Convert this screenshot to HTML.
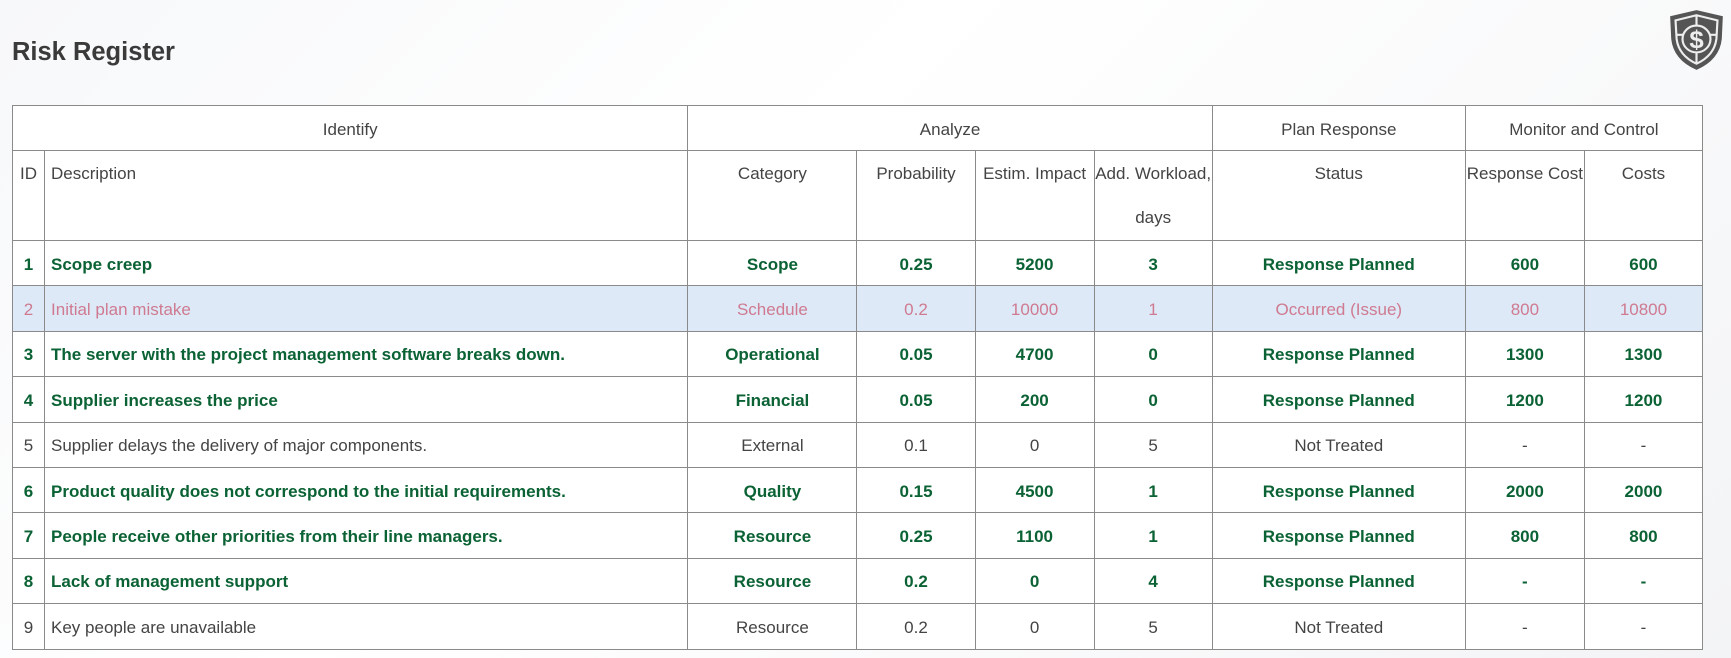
<!DOCTYPE html>
<html><head><meta charset="utf-8"><style>
html,body{margin:0;padding:0;width:1731px;height:658px;overflow:hidden;background:linear-gradient(135deg,#f7f8fa,#ffffff 40%,#f3f4f6);font-family:"Liberation Sans",sans-serif;}
h1{position:absolute;left:12px;top:38px;margin:0;font-size:25.5px;font-weight:bold;color:#3a3a3a;}
table{position:absolute;left:12px;top:105px;border-collapse:collapse;table-layout:fixed;width:1691px;font-size:17px;color:#444;background:#fff;}
td{border:1px solid #8a8a8a;text-align:center;padding:3px 0 0 0;height:41.4px;line-height:20px;white-space:nowrap;overflow:hidden;}
tr.sub td{vertical-align:top;line-height:44px;height:88px;padding-top:1px;}
tr.top td{height:41px;}
td.l{text-align:left;padding-left:6px;}
tr.g td{color:#0b6234;font-weight:bold;}
tr.p td{color:#cf7a90;background:#dde9f7;}
</style></head><body>
<h1>Risk Register</h1>
<svg style="position:absolute;left:1668px;top:8px" width="57" height="64" viewBox="0 0 53 62" preserveAspectRatio="none">
<path d="M26.5 2 L51 8 L50 30 Q48 50 26.5 60 Q5 50 3 30 L2 8 Z" fill="#555"/>
<path d="M26.5 7 L46 12 L45 30 Q43 46 26.5 54 Q10 46 8 30 L7 12 Z" fill="none" stroke="#eee" stroke-width="2"/>
<path d="M8 26 H45 M26.5 7 V54" stroke="#eee" stroke-width="2"/>
<circle cx="26.5" cy="30" r="13" fill="#555" stroke="#eee" stroke-width="2"/>
<text x="26.5" y="39" font-size="24" font-weight="bold" text-anchor="middle" fill="#eee" font-family="Liberation Sans">$</text>
</svg>
<table>
<colgroup><col style="width:32px"><col style="width:643px"><col style="width:169px"><col style="width:118px"><col style="width:119px"><col style="width:118px"><col style="width:253px"><col style="width:119px"><col style="width:118px"></colgroup>
<tr class="top"><td colspan="2">Identify</td><td colspan="4">Analyze</td><td>Plan Response</td><td colspan="2">Monitor and Control</td></tr>
<tr class="sub"><td>ID</td><td class="l">Description</td><td>Category</td><td>Probability</td><td>Estim. Impact</td><td style="white-space:normal">Add. Workload, days</td><td>Status</td><td>Response Cost</td><td>Costs</td></tr>
<tr class="g"><td>1</td><td class="l">Scope creep</td><td>Scope</td><td>0.25</td><td>5200</td><td>3</td><td>Response Planned</td><td>600</td><td>600</td></tr>
<tr class="p"><td>2</td><td class="l">Initial plan mistake</td><td>Schedule</td><td>0.2</td><td>10000</td><td>1</td><td>Occurred (Issue)</td><td>800</td><td>10800</td></tr>
<tr class="g"><td>3</td><td class="l">The server with the project management software breaks down.</td><td>Operational</td><td>0.05</td><td>4700</td><td>0</td><td>Response Planned</td><td>1300</td><td>1300</td></tr>
<tr class="g"><td>4</td><td class="l">Supplier increases the price</td><td>Financial</td><td>0.05</td><td>200</td><td>0</td><td>Response Planned</td><td>1200</td><td>1200</td></tr>
<tr><td>5</td><td class="l">Supplier delays the delivery of major components.</td><td>External</td><td>0.1</td><td>0</td><td>5</td><td>Not Treated</td><td>-</td><td>-</td></tr>
<tr class="g"><td>6</td><td class="l">Product quality does not correspond to the initial requirements.</td><td>Quality</td><td>0.15</td><td>4500</td><td>1</td><td>Response Planned</td><td>2000</td><td>2000</td></tr>
<tr class="g"><td>7</td><td class="l">People receive other priorities from their line managers.</td><td>Resource</td><td>0.25</td><td>1100</td><td>1</td><td>Response Planned</td><td>800</td><td>800</td></tr>
<tr class="g"><td>8</td><td class="l">Lack of management support</td><td>Resource</td><td>0.2</td><td>0</td><td>4</td><td>Response Planned</td><td>-</td><td>-</td></tr>
<tr><td>9</td><td class="l">Key people are unavailable</td><td>Resource</td><td>0.2</td><td>0</td><td>5</td><td>Not Treated</td><td>-</td><td>-</td></tr>
</table>
</body></html>
